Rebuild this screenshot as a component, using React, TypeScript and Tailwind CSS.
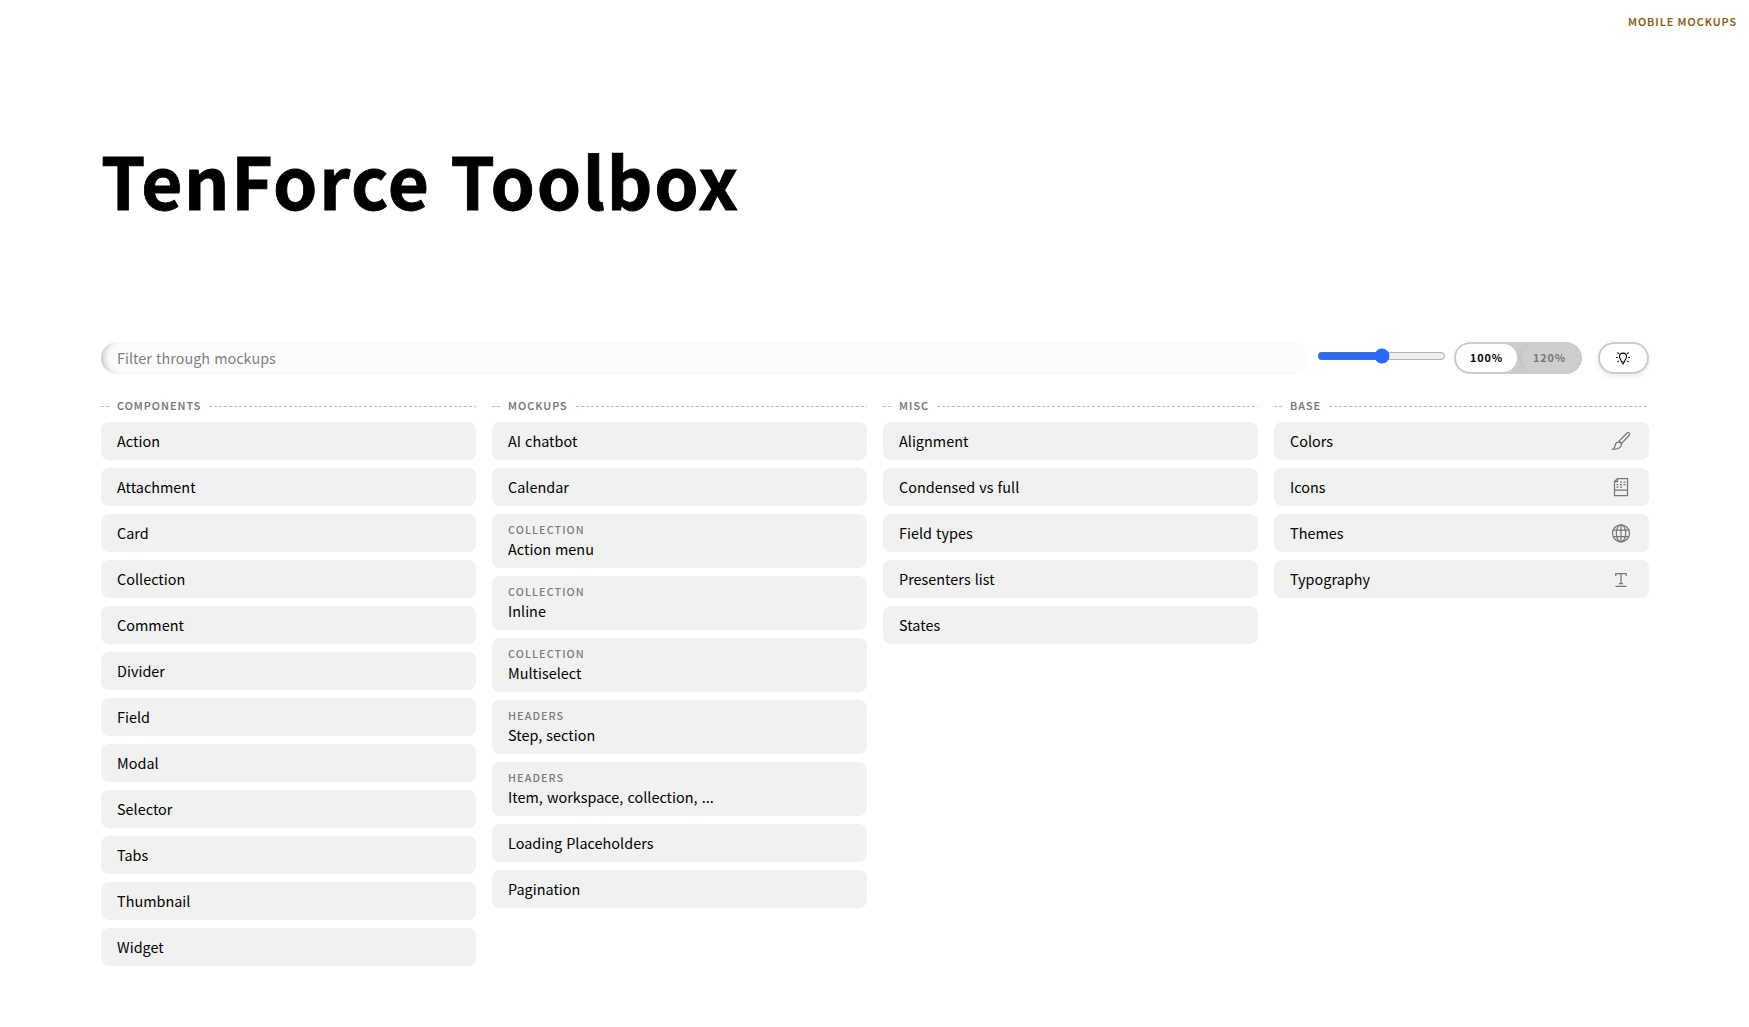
import React from "react";

type Item = { label: string; group?: string; icon?: React.ReactNode };

const svgProps = {
  width: 20,
  height: 20,
  viewBox: "0 0 20 20",
  fill: "none",
  stroke: "currentColor",
  strokeWidth: 1.25,
};

const Brush = () => (
  <svg {...svgProps}>
    <path d="M18.300 1.900c.8.7.5 1.600-.1 2.400L10.600 12.400l-2.500-2.300L15.900 2.300c.8-.7 1.700-1.100 2.400-.4z" />
    <path d="M7.600 11.100c1.600-.1 3 1.400 2.700 2.900-.4 2.700-3.600 4.300-8.500 4.200 1.800-1 2-1.700 2.300-3.600.3-2 1.500-3.400 3.500-3.500z" />
  </svg>
);

const SheetIcon = () => (
  <svg {...svgProps}>
    <path d="M6.500 1.500H16.500V18.500H3.500V4.500zM6.500 1.500V4.500H3.500M3.500 13H16.500" />
    <path d="M9 5h2M12.500 5h2M5.500 7.500h2M9 7.500h2M12.500 7.500h2M5.500 10.200h2M9 10.200h2" />
  </svg>
);

const Globe = () => (
  <svg {...svgProps}>
    <circle cx="10" cy="10.300" r="8.500" />
    <ellipse cx="10" cy="10.300" rx="4.700" ry="8.500" />
    <path d="M10 1.800v17M2.500 7h15M2.500 13.500h15" />
  </svg>
);

const TypeIcon = () => (
  <svg {...svgProps}>
    <path d="M4.800 7V4.500H15.200V7M10 4.500V14.500M8 14.500h4M4.500 17.300h11" />
  </svg>
);

const Bulb = () => (
  <svg width="16" height="16" viewBox="0 0 16 16" fill="none" stroke="currentColor" strokeWidth="1.1">
    <path d="M6.500 12C6.500 10 4.500 9 4.500 6.600a3.500 3.500 0 0 1 7 0C11.500 9 9.500 10 9.500 12zM7 13.200h2M7.600 14.200h.8" />
    <path d="M1 7.500h1.800M13.200 7.500H15M2.500 2.500l1.200 1.200M13.500 2.500l-1.200 1.200M2.500 12l1.200-1.100M13.500 12l-1.200-1.100" />
  </svg>
);

const columns: { title: string; items: Item[] }[] = [
  {
    title: "Components",
    items: ["Action", "Attachment", "Card", "Collection", "Comment", "Divider", "Field", "Modal", "Selector", "Tabs", "Thumbnail", "Widget"].map((label) => ({ label })),
  },
  {
    title: "Mockups",
    items: [
      { label: "AI chatbot" },
      { label: "Calendar" },
      { group: "Collection", label: "Action menu" },
      { group: "Collection", label: "Inline" },
      { group: "Collection", label: "Multiselect" },
      { group: "Headers", label: "Step, section" },
      { group: "Headers", label: "Item, workspace, collection, ..." },
      { label: "Loading Placeholders" },
      { label: "Pagination" },
    ],
  },
  {
    title: "Misc",
    items: ["Alignment", "Condensed vs full", "Field types", "Presenters list", "States"].map((label) => ({ label })),
  },
  {
    title: "Base",
    items: [
      { label: "Colors", icon: <Brush /> },
      { label: "Icons", icon: <SheetIcon /> },
      { label: "Themes", icon: <Globe /> },
      { label: "Typography", icon: <TypeIcon /> },
    ],
  },
];

function Card({ label, group, icon }: Item) {
  return (
    <a className={`flex items-center justify-between rounded-lg bg-[#f1f1f1] pr-[18px] pl-4 ${group ? "h-[54px]" : "h-[38px]"}`}>
      <span className="flex flex-col">
        {group && (
          <span className="h-4 text-[10.8px] leading-[15px] font-medium tracking-[1.08px] text-[#7c7c7c] uppercase">{group}</span>
        )}
        <span className="text-[14.4px] leading-[22px] tracking-[0.02px] text-black [word-spacing:0.85px]">{label}</span>
      </span>
      {icon && <span className="text-[#777]">{icon}</span>}
    </a>
  );
}

export default function App() {
  return (
    <div className="flex h-[1027px] flex-col overflow-hidden bg-white font-['Noto_Sans_CJK_SC',sans-serif] text-black">
      <div className="flex h-[42px] items-center justify-end px-3">
        <a className="text-[10.8px] font-medium tracking-[1px] text-[#855c15] uppercase [-webkit-text-stroke:0.2px_#855c15]">Mobile mockups</a>
      </div>
      <main className="px-[101px] pr-[100px]">
        <h1 className="mt-[87px] h-[101px] text-[71px] leading-[101px] font-bold tracking-[1.65px] whitespace-nowrap [-webkit-text-stroke:0.9px_#000] [word-spacing:2px]">
          TenForce Toolbox
        </h1>
        <div className="mt-28 flex h-8 items-center">
          <input
            className="h-8 w-[1208px] rounded-full bg-[#fcfcfc] px-4 pb-0.5 text-[14.4px] tracking-[0.03px] shadow-[inset_8px_0_8px_-7px_rgba(0,0,0,0.3)] outline-none [word-spacing:0.8px] placeholder:text-[#808080]"
            placeholder="Filter through mockups"
          />
          <input type="range" className="mb-1 ml-2 h-4 w-[129px] accent-[#2a68ff]" defaultValue={50} />
          <div className="ml-2 flex h-8 w-32 gap-0.5 rounded-full border-2 border-[#cccccc] bg-[#cccccc] text-[10.8px] font-bold tracking-[0.85px]">
            <button className="flex-1 rounded-full bg-white pb-0.5">100%</button>
            <button className="flex-1 rounded-full bg-[#cecece] pb-0.5 text-[#777] shadow-[inset_4px_0_4px_-3px_rgba(0,0,0,0.08)]">120%</button>
          </div>
          <button className="ml-4 flex h-8 w-[51px] items-center justify-center rounded-full border-2 border-[#cccccc] bg-white pr-px pb-px shadow-[0_3px_5px_rgba(0,0,0,0.08)]">
            <Bulb />
          </button>
        </div>
        <div className="mt-6 grid grid-cols-4 gap-4">
          {columns.map((c) => (
            <section key={c.title} className="flex flex-col gap-2">
              <h2 className="-mb-px flex h-[17px] items-center gap-2 text-[10.8px] font-medium tracking-[1.04px] text-[#777] uppercase [-webkit-text-stroke:0.15px_#777]">
                <span className="h-px w-2 bg-[repeating-linear-gradient(90deg,#b8b8b8_0_3px,transparent_3px_5px)]" />
                <span className="pb-[3px] leading-4">{c.title}</span>
                <span className="h-px flex-1 bg-[repeating-linear-gradient(90deg,#b8b8b8_0_3px,transparent_3px_5px)]" />
              </h2>
              {c.items.map((item) => (
                <Card key={item.label} {...item} />
              ))}
            </section>
          ))}
        </div>
      </main>
    </div>
  );
}
